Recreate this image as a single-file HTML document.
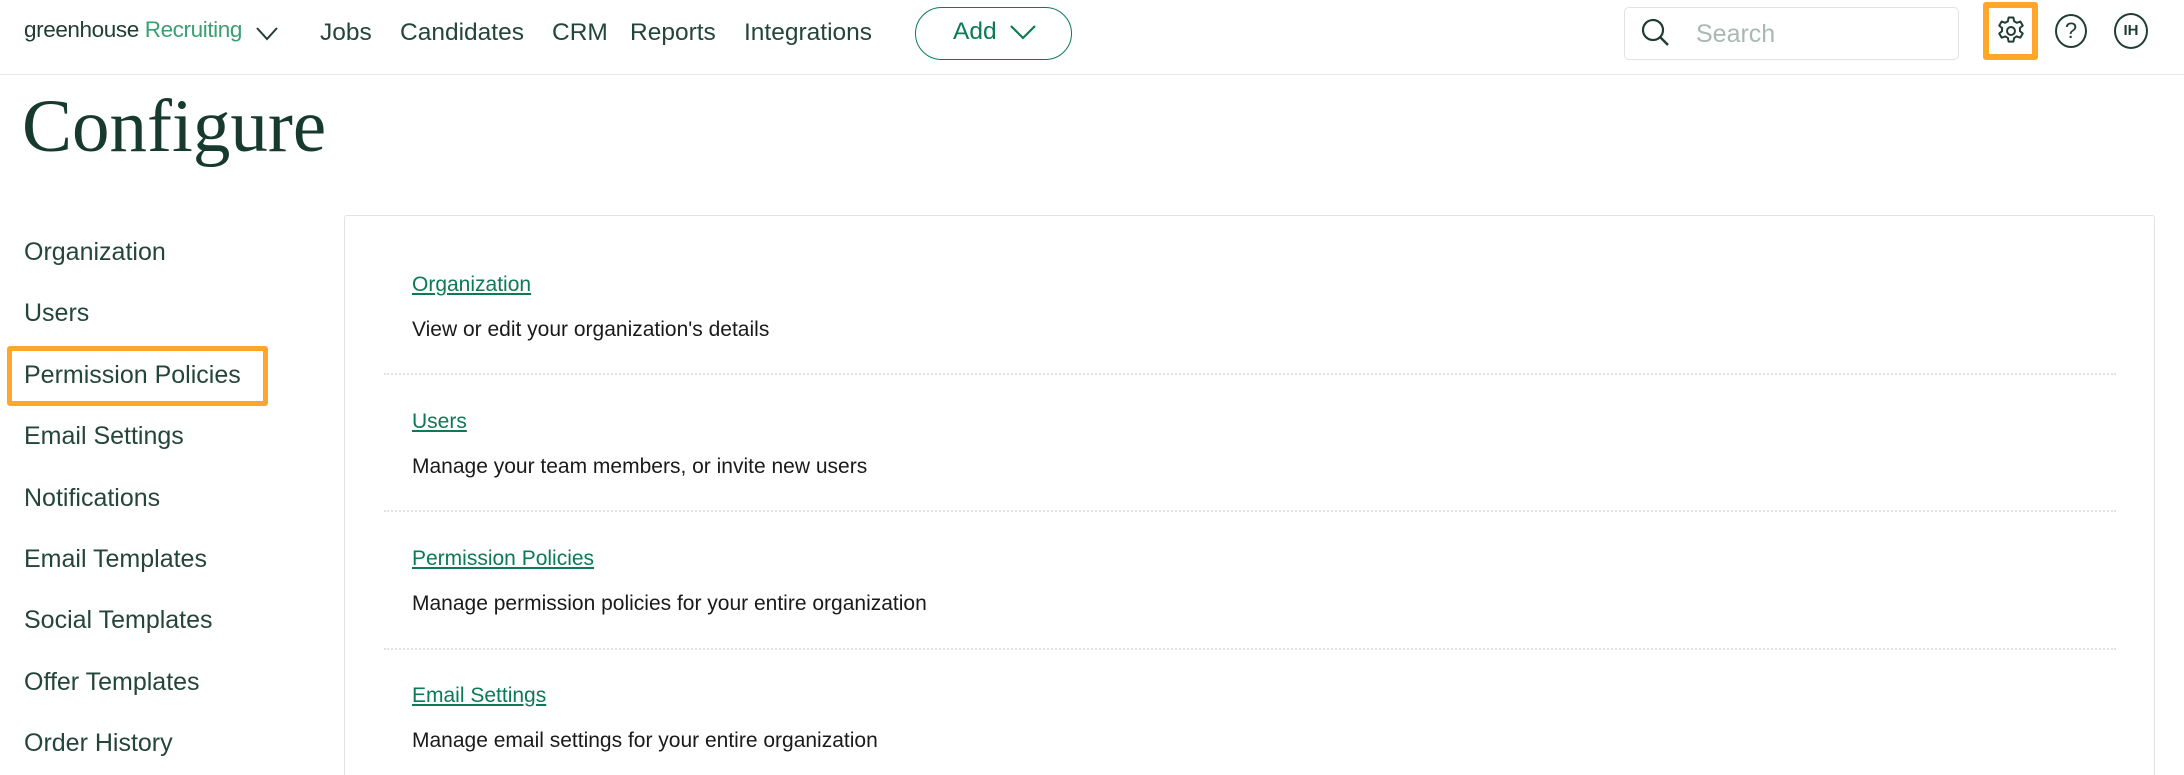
<!DOCTYPE html>
<html style="width:2184px;height:775px;overflow:hidden"><head><meta charset="utf-8"><style>
*{margin:0;padding:0;box-sizing:border-box}
body{width:2184px;height:775px;overflow:hidden;background:#fff;font-family:"Liberation Sans",sans-serif;color:#1f3d33;position:relative}
.a{position:absolute;white-space:nowrap}
.nav{font-size:24.5px;color:#24453a;top:19px}
.side{font-size:25px;color:#24453a;left:24px}
.lnk{font-size:21px;color:#0b7a55;text-decoration:underline;left:412px}
.desc{font-size:21px;color:#1a1a1a;left:412px}
.sep{position:absolute;left:384px;width:1732px;border-top:2px dotted #e2e2e2;height:0}
</style></head><body>
<div class="a" style="top:0;left:0;width:2184px;height:75px;border-bottom:1px solid #e8e8e8"></div>
<div class="a" style="left:24px;top:17px;font-size:22.5px;letter-spacing:-0.4px"><span style="color:#1f3d33">greenhouse</span> <span style="color:#3a9f72">Recruiting</span></div>
<svg class="a" style="left:254px;top:24px" width="26" height="18" viewBox="0 0 26 18"><path d="M3 4l10 11 10-11" fill="none" stroke="#1f3d33" stroke-width="2"/></svg>
<div class="a nav" style="left:320px">Jobs</div>
<div class="a nav" style="left:400px">Candidates</div>
<div class="a nav" style="left:552px">CRM</div>
<div class="a nav" style="left:630px">Reports</div>
<div class="a nav" style="left:744px">Integrations</div>
<div class="a" style="left:915px;top:7px;width:157px;height:53px;border:1.5px solid #0b7a55;border-radius:27px"></div>
<div class="a" style="left:953px;top:18px;font-size:24.5px;color:#0b7a55">Add</div>
<svg class="a" style="left:1008px;top:22px" width="30" height="20" viewBox="0 0 30 20"><path d="M3 4l12 12 12-12" fill="none" stroke="#0b7a55" stroke-width="2.2"/></svg>
<div class="a" style="left:1624px;top:7px;width:335px;height:53px;border:1px solid #e2e2e2;border-radius:5px"></div>
<svg class="a" style="left:1640px;top:17px" width="32" height="32" viewBox="0 0 32 32"><circle cx="13" cy="13" r="10" fill="none" stroke="#1f3d33" stroke-width="2.2"/><path d="M20 20l8 8" stroke="#1f3d33" stroke-width="2.4"/></svg>
<div class="a" style="left:1696px;top:20px;font-size:25px;color:#a9b8b2">Search</div>
<div class="a" style="left:1983px;top:2px;width:55px;height:58px;border:6px solid #ffa62b;border-radius:3px"></div>
<svg class="a" style="left:1994px;top:14px" width="34" height="34" viewBox="0 0 24 24"><path fill="none" stroke="#1f3d33" stroke-width="1.4" stroke-linejoin="round" d="M10.3 2.5h3.4l.5 2.6 1.9 1.1 2.5-.9 1.7 2.9-2 1.7v2.2l2 1.7-1.7 2.9-2.5-.9-1.9 1.1-.5 2.6h-3.4l-.5-2.6-1.9-1.1-2.5.9-1.7-2.9 2-1.7v-2.2l-2-1.7 1.7-2.9 2.5.9 1.9-1.1z"/><circle cx="12" cy="12" r="2.8" fill="none" stroke="#1f3d33" stroke-width="1.4"/></svg>
<div class="a" style="left:2055px;top:14px;width:32px;height:34px;border:2px solid #1f3d33;border-radius:50%;text-align:center;font-size:22px;line-height:30px;color:#1f3d33">?</div>
<div class="a" style="left:2114px;top:13px;width:34px;height:36px;border:2px solid #1f3d33;border-radius:50%;text-align:center;font-size:15px;font-weight:bold;line-height:32px;color:#1f3d33">IH</div>
<div class="a" style="left:22px;top:84px;font-family:'Liberation Serif',serif;font-size:75px;color:#173a2e">Configure</div>
<div class="a side" style="top:238px">Organization</div>
<div class="a side" style="top:299px">Users</div>
<div class="a" style="left:7px;top:346px;width:261px;height:60px;border:5px solid #ffa62b;border-radius:3px"></div>
<div class="a side" style="top:361px">Permission Policies</div>
<div class="a side" style="top:422px">Email Settings</div>
<div class="a side" style="top:484px">Notifications</div>
<div class="a side" style="top:545px">Email Templates</div>
<div class="a side" style="top:606px">Social Templates</div>
<div class="a side" style="top:668px">Offer Templates</div>
<div class="a side" style="top:729px">Order History</div>
<div class="a" style="left:344px;top:215px;width:1811px;height:580px;border:1px solid #e2e2e2;border-radius:3px"></div>
<div class="a lnk" style="top:273px">Organization</div>
<div class="a desc" style="top:318px">View or edit your organization's details</div>
<div class="sep" style="top:373px"></div>
<div class="a lnk" style="top:410px">Users</div>
<div class="a desc" style="top:455px">Manage your team members, or invite new users</div>
<div class="sep" style="top:510px"></div>
<div class="a lnk" style="top:547px">Permission Policies</div>
<div class="a desc" style="top:592px">Manage permission policies for your entire organization</div>
<div class="sep" style="top:648px"></div>
<div class="a lnk" style="top:684px">Email Settings</div>
<div class="a desc" style="top:729px">Manage email settings for your entire organization</div>
</body></html>
